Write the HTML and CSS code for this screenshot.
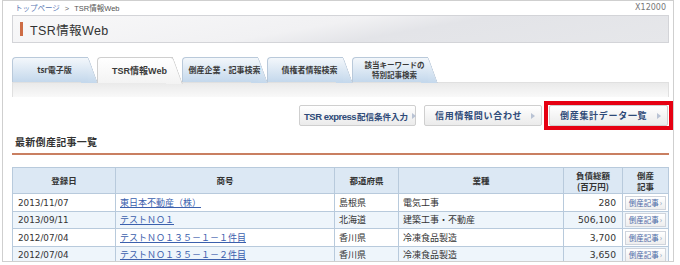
FILE: index.html
```html
<!DOCTYPE html>
<html lang="ja">
<head>
<meta charset="utf-8">
<title>TSR情報Web</title>
<link rel="stylesheet" href="styles.css">
</head>
<body>
<div class="frame">
  <div class="topline">
    <span class="crumb"><a class="crumb-link">トップページ</a><span class="crumb-sep">&gt;</span>TSR情報Web</span>
    <span class="code">X12000</span>
  </div>
  <div class="titlebar"><span class="title">TSR情報Web</span></div>
  <div class="tabs">
    <div class="tab">tsr電子版</div>
    <div class="tab tab-active">TSR情報Web</div>
    <div class="tab">倒産企業・記事検索</div>
    <div class="tab">債権者情報検索</div>
    <div class="tab tab-two">該当キーワードの<br>特別記事検索</div>
  </div>
  <div class="band"></div>
  <div class="btnrow">
    <a class="btn btn-first"><span class="btn-label"><span class="btn-latin">TSR express</span>配信条件入力</span><span class="arrow"></span></a>
    <a class="btn btn-wide"><span class="btn-label">信用情報問い合わせ</span><span class="arrow"></span></a>
    <div class="highlight">
      <a class="btn btn-wide"><span class="btn-label">倒産集計データ一覧</span><span class="arrow"></span></a>
    </div>
  </div>
  <h2 class="heading">最新倒産記事一覧</h2>
  <table class="list">
    <colgroup>
      <col class="c-date"><col class="c-name"><col class="c-pref"><col class="c-ind"><col class="c-debt"><col class="c-art">
    </colgroup>
    <thead>
      <tr>
        <th>登録日</th>
        <th>商号</th>
        <th>都道府県</th>
        <th>業種</th>
        <th><span class="th-line">負債総額</span><span class="th-line">(百万円)</span></th>
        <th><span class="th-line">倒産</span><span class="th-line">記事</span></th>
      </tr>
    </thead>
    <tbody>
      <tr>
        <td class="num">2013/11/07</td>
        <td><a class="link">東日本不動産（株）</a></td>
        <td>島根県</td>
        <td>電気工事</td>
        <td class="num r">280</td>
        <td class="ac"><a class="mini">倒産記事<span class="mini-arrow">›</span></a></td>
      </tr>
      <tr>
        <td class="num">2013/09/11</td>
        <td><a class="link">テストＮＯ１</a></td>
        <td>北海道</td>
        <td>建築工事・不動産</td>
        <td class="num r">506,100</td>
        <td class="ac"><a class="mini">倒産記事<span class="mini-arrow">›</span></a></td>
      </tr>
      <tr>
        <td class="num">2012/07/04</td>
        <td><a class="link">テストＮＯ１３５－１－１件目</a></td>
        <td>香川県</td>
        <td>冷凍食品製造</td>
        <td class="num r">3,700</td>
        <td class="ac"><a class="mini">倒産記事<span class="mini-arrow">›</span></a></td>
      </tr>
      <tr>
        <td class="num">2012/07/04</td>
        <td><a class="link">テストＮＯ１３５－１－２件目</a></td>
        <td>香川県</td>
        <td>冷凍食品製造</td>
        <td class="num r">3,650</td>
        <td class="ac"><a class="mini">倒産記事<span class="mini-arrow">›</span></a></td>
      </tr>
    </tbody>
  </table>
</div>
</body>
</html>
```
FILE: styles.css
```css
* { box-sizing: border-box; }
html, body { margin: 0; padding: 0; background: #fff; }
body {
  font-family: "Noto Sans CJK JP", sans-serif;
  color: #333;
}
.frame {
  margin-left: 2px;
  width: 672px;
  height: 262px;
  border: 1px solid #cfcfcf;
  padding: 0 4px 0 9px;
  overflow: hidden;
}
.topline {
  height: 14px;
  display: flex;
  align-items: center;
  justify-content: space-between;
  padding: 0 3px;
  font-size: 7.5px;
  line-height: 1;
}
.crumb { color: #555; font-family: "Liberation Sans", "Noto Sans CJK JP", sans-serif; }
.crumb-link { color: #5b78b4; font-family: "Noto Sans CJK JP", sans-serif; }
.crumb-sep { margin: 0 5px; color: #666; }
.code { font-family: "DejaVu Sans", sans-serif; font-size: 8px; color: #777; }

.titlebar {
  height: 28px;
  border: 1px solid #d3d4d8;
  background: linear-gradient(170deg, #f8f8f9 0%, #f1f1f3 45%, #e3e4e8 60%, #e6e7ea 100%);
  display: flex;
  align-items: center;
  padding-left: 7px;
}
.title {
  border-left: 3px solid #cd6c45;
  height: 14px;
  display: flex;
  align-items: center;
  padding-left: 7px;
  font-family: "Liberation Sans", "Noto Sans CJK JP", sans-serif;
  font-size: 12.5px;
  letter-spacing: 0.4px;
  color: #333;
}

.tabs {
  margin-top: 14px;
  height: 25px;
  display: flex;
  align-items: flex-end;
  position: relative;
  z-index: 2;
}
.tab {
  position: relative;
  width: 76px;
  height: 25px;
  margin-right: 9px;
  padding-left: 8px;
  display: flex;
  align-items: center;
  justify-content: center;
  text-align: center;
  white-space: nowrap;
  font-size: 8px;
  font-weight: bold;
  color: #3a3a3a;
  line-height: 10px;
  border: 1px solid #b9c9da;
  border-right: none;
  border-bottom: none;
  border-radius: 4px 0 0 0;
  background: linear-gradient(#f3f7fb, #c4d8ec);
}
.tab::after {
  content: "";
  position: absolute;
  top: -1px;
  right: -10px;
  width: 16px;
  height: 25px;
  border-top: 1px solid #b9c9da;
  border-right: 1px solid #b9c9da;
  border-radius: 0 3px 0 0;
  background: linear-gradient(#f3f7fb, #c4d8ec);
  transform: skewX(20deg);
  transform-origin: bottom left;
  z-index: -1;
}
.tab-active {
  background: linear-gradient(#ffffff, #f3f3f3);
  border-color: #cfcfcf;
  font-family: "Liberation Sans", "Noto Sans CJK JP", sans-serif;
  font-size: 9px;
  height: 26px;
  margin-bottom: -1px;
  z-index: 1;
}
.tab-active::after {
  background: linear-gradient(#ffffff, #f3f3f3);
  border-color: #cfcfcf;
  height: 26px;
}
.tab-two { font-size: 7.5px; line-height: 10px; }

.band {
  height: 15px;
  border: 1px solid #e0e0e0;
  border-bottom: none;
  background: linear-gradient(#eaeaea, #f9f9f9);
  position: relative;
  z-index: 1;
}

.btnrow {
  margin-top: 4px;
  margin-right: -4px;
  height: 29px;
  display: flex;
  justify-content: flex-end;
  align-items: center;
}
.btn {
  height: 21px;
  width: 117px;
  display: flex;
  align-items: center;
  justify-content: space-between;
  padding: 0 6px 0 10px;
  border: 1px solid #cfcfcf;
  border-radius: 2px;
  background: linear-gradient(#ffffff, #ebebeb);
  font-size: 9px;
  font-weight: bold;
  letter-spacing: 0.3px;
  color: #2e4a78;
  margin-left: 8px;
}
.btn-first { padding: 0 5px 0 4px; font-size: 8.5px; letter-spacing: 0; }
.btn-label { white-space: nowrap; }
.btn-latin {
  font-family: "Liberation Sans", sans-serif;
  font-size: 9.5px;
  letter-spacing: -0.5px;
  margin-right: 1px;
}
.btn-wide { width: 118px; letter-spacing: 0.7px; }
.arrow {
  flex: none;
  width: 0;
  height: 0;
  border-top: 3.5px solid transparent;
  border-bottom: 3.5px solid transparent;
  border-left: 4px solid #b9c3d4;
  margin-left: 4px;
}
.highlight {
  margin-left: 2px;
  border: 4px solid #e60012;
  padding: 0 1px 0 1px;
  height: 29px;
  display: flex;
  align-items: center;
}
.highlight .btn { margin-left: 0; width: 119px; }

.heading {
  margin: 5px 0 0 0;
  padding: 0 0 4px 3px;
  font-size: 10px;
  line-height: 14px;
  letter-spacing: 0.3px;
  font-weight: bold;
  color: #333;
  border-bottom: 2px solid #c97f61;
}

.list {
  margin-top: 12px;
  width: 656px;
  border-collapse: collapse;
  table-layout: fixed;
  font-size: 9px;
}
.c-date { width: 103px; }
.c-name { width: 219px; }
.c-pref { width: 64px; }
.c-ind { width: 165px; }
.c-debt { width: 59px; }
.c-art { width: 46px; }
.list th, .list td {
  border: 1px solid #b8cadc;
  padding: 0 4px;
  white-space: nowrap;
  overflow: hidden;
}
.list th {
  height: 26px;
  background: #dce8f4;
  font-size: 8.5px;
  line-height: 11px;
  font-weight: bold;
  color: #333;
  text-align: center;
  padding: 0 2px;
}
.th-line { display: block; line-height: 11px; }
.list td {
  height: 18px;
  color: #333;
  line-height: 12px;
}
.list tbody tr:nth-child(even) td { background: #eef5fb; height: 17px; }
.list td.num { font-family: "DejaVu Sans", sans-serif; font-size: 8.8px; color: #333; padding-left: 5px; }
.list td.r { text-align: right; padding-right: 6px; font-size: 9.2px; }
.list td.ac { text-align: center; padding: 0; }
.link { color: #3b60ad; text-decoration: underline; }
.mini {
  display: inline-flex;
  align-items: center;
  justify-content: center;
  width: 41px;
  height: 14px;
  border: 1px solid #cfd4dc;
  background: linear-gradient(#ffffff, #eeeeee);
  font-size: 7.5px;
  color: #4d6aa6;
  vertical-align: middle;
  gap: 1px;
}
.mini-arrow { font-size: 7.5px; color: #8796b4; }
```
